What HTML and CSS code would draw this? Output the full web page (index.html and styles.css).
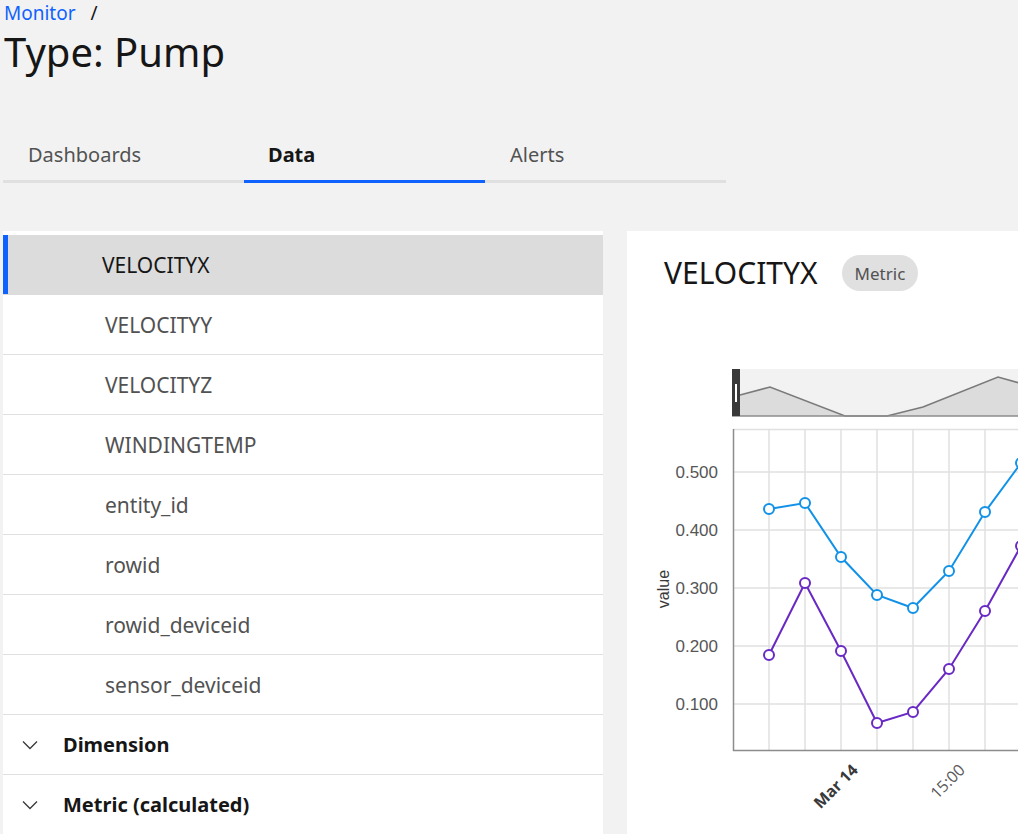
FILE: index.html
```html
<!DOCTYPE html>
<html lang="en">
<head>
<meta charset="utf-8">
<title>Type: Pump</title>
<link rel="stylesheet" href="styles.css">
</head>
<body>
<header class="page-header">
  <nav class="breadcrumb">
    <a class="crumb-link">Monitor</a>
    <span class="crumb-sep">/</span>
  </nav>
  <h1 class="page-title">Type: Pump</h1>
</header>

<div class="tabs">
  <div class="tab">Dashboards</div>
  <div class="tab tab-active">Data</div>
  <div class="tab">Alerts</div>
</div>

<main class="content">
  <section class="list-panel">
    <div class="row row-selected">VELOCITYX</div>
    <div class="row">VELOCITYY</div>
    <div class="row">VELOCITYZ</div>
    <div class="row">WINDINGTEMP</div>
    <div class="row">entity_id</div>
    <div class="row">rowid</div>
    <div class="row">rowid_deviceid</div>
    <div class="row">sensor_deviceid</div>
    <div class="row row-group">
      <svg class="chevron" viewBox="0 0 16 10" width="16" height="10"><path d="M1 1.5 L8 8.5 L15 1.5" fill="none" stroke="#393939" stroke-width="1.3"/></svg>
      <span>Dimension</span>
    </div>
    <div class="row row-group">
      <svg class="chevron" viewBox="0 0 16 10" width="16" height="10"><path d="M1 1.5 L8 8.5 L15 1.5" fill="none" stroke="#393939" stroke-width="1.3"/></svg>
      <span>Metric (calculated)</span>
    </div>
  </section>

  <section class="detail-card">
    <div class="detail-header">
      <h2 class="detail-title">VELOCITYX</h2>
      <span class="tag">Metric</span>
    </div>
    <svg class="chart" width="391" height="543" viewBox="627 291 391 543">
      <!-- brush / minimap -->
      <rect x="732" y="369" width="300" height="47" fill="#f2f2f2"/>
      <path d="M740 395 L770 387 L845 416 L887 416 L923 407 L998 377 L1030 386 L1030 416 L740 416 Z" fill="#dcdcdc"/>
      <path d="M740 395 L770 387 L845 416 L887 416 L923 407 L998 377 L1030 386" fill="none" stroke="#7a7a7a" stroke-width="1.5"/>
      <line x1="732" y1="416" x2="1030" y2="416" stroke="#8d8d8d" stroke-width="1.5"/>
      <rect x="732" y="369" width="8" height="47" fill="#393939"/>
      <rect x="735" y="384" width="2" height="18" fill="#ffffff"/>

      <!-- grid -->
      <g stroke="#e0e0e0" stroke-width="1.5">
        <line x1="733" y1="429.5" x2="1030" y2="429.5"/>
        <line x1="733" y1="472" x2="1030" y2="472"/>
        <line x1="733" y1="530" x2="1030" y2="530"/>
        <line x1="733" y1="588" x2="1030" y2="588"/>
        <line x1="733" y1="646" x2="1030" y2="646"/>
        <line x1="733" y1="704" x2="1030" y2="704"/>
        <line x1="769" y1="429" x2="769" y2="750"/>
        <line x1="805" y1="429" x2="805" y2="750"/>
        <line x1="841" y1="429" x2="841" y2="750"/>
        <line x1="877" y1="429" x2="877" y2="750"/>
        <line x1="913" y1="429" x2="913" y2="750"/>
        <line x1="949" y1="429" x2="949" y2="750"/>
        <line x1="985" y1="429" x2="985" y2="750"/>
      </g>
      <!-- axes -->
      <line x1="733.5" y1="429" x2="733.5" y2="751" stroke="#8d8d8d" stroke-width="1.5"/>
      <line x1="733" y1="750.5" x2="1030" y2="750.5" stroke="#8d8d8d" stroke-width="1.5"/>

      <!-- y tick labels -->
      <g class="tick-y" text-anchor="end">
        <text x="718" y="478">0.500</text>
        <text x="718" y="536">0.400</text>
        <text x="718" y="594">0.300</text>
        <text x="718" y="652">0.200</text>
        <text x="718" y="710">0.100</text>
      </g>
      <text class="axis-title" transform="translate(669 589) rotate(-90)" text-anchor="middle">value</text>

      <!-- x tick labels -->
      <text class="tick-x tick-x-bold" transform="translate(859 771) rotate(-45)" text-anchor="end">Mar 14</text>
      <text class="tick-x" transform="translate(966 771) rotate(-45)" text-anchor="end">15:00</text>

      <!-- series -->
      <polyline points="769,509 805,503 841,557 877,595 913,608 949,571 985,512 1021,463" fill="none" stroke="#1192e8" stroke-width="2"/>
      <polyline points="769,655 805,583 841,651 877,723 913,712 949,669 985,611 1021,546" fill="none" stroke="#6929c4" stroke-width="2"/>
      <g fill="#ffffff" stroke="#1192e8" stroke-width="2">
        <circle cx="769" cy="509" r="5"/>
        <circle cx="805" cy="503" r="5"/>
        <circle cx="841" cy="557" r="5"/>
        <circle cx="877" cy="595" r="5"/>
        <circle cx="913" cy="608" r="5"/>
        <circle cx="949" cy="571" r="5"/>
        <circle cx="985" cy="512" r="5"/>
        <circle cx="1021" cy="463" r="5"/>
      </g>
      <g fill="#ffffff" stroke="#6929c4" stroke-width="2">
        <circle cx="769" cy="655" r="5"/>
        <circle cx="805" cy="583" r="5"/>
        <circle cx="841" cy="651" r="5"/>
        <circle cx="877" cy="723" r="5"/>
        <circle cx="913" cy="712" r="5"/>
        <circle cx="949" cy="669" r="5"/>
        <circle cx="985" cy="611" r="5"/>
        <circle cx="1021" cy="546" r="5"/>
      </g>
    </svg>
  </section>
</main>
</body>
</html>
```

FILE: styles.css
```css
* { box-sizing: border-box; }

html, body {
  margin: 0;
  padding: 0;
}

body {
  width: 1018px;
  height: 834px;
  overflow: hidden;
  background: #f2f2f2;
  font-family: "Noto Sans", "Liberation Sans", sans-serif;
  color: #161616;
}

.page-header {
  padding-left: 4px;
}

.breadcrumb {
  display: flex;
  align-items: center;
  height: 26px;
  font-size: 19px;
  line-height: 26px;
}

.crumb-link {
  color: #0f62fe;
  text-decoration: none;
}

.crumb-sep {
  margin-left: 15px;
  color: #161616;
}

.page-title {
  margin: 2px 0 0 0;
  font-size: 40px;
  font-weight: 400;
  line-height: 48px;
  color: #161616;
}

.tabs {
  display: flex;
  margin-top: 52px;
  margin-left: 3px;
  width: 723px;
}

.tab {
  width: 241px;
  height: 55px;
  padding-left: 25px;
  padding-top: 1px;
  display: flex;
  align-items: center;
  border-bottom: 3px solid #e0e0e0;
  font-size: 20px;
  color: #525252;
}

.tab-active {
  border-bottom-color: #0f62fe;
  color: #161616;
  font-weight: 700;
  padding-left: 24px;
}

.content {
  display: flex;
  margin-top: 48px;
  padding-left: 3px;
  gap: 24px;
  height: 603px;
}

.list-panel {
  width: 600px;
  flex-shrink: 0;
  background: #ffffff;
  padding-top: 4px;
}

.row {
  height: 60px;
  display: flex;
  align-items: center;
  padding-left: 102px;
  border-bottom: 1px solid #e0e0e0;
  font-size: 21px;
  color: #525252;
}

.row-selected {
  background: #dcdcdc;
  color: #161616;
  padding-left: 99px;
  box-shadow: inset 5px 0 0 #0f62fe;
  border-bottom-color: #dcdcdc;
}

.row-group {
  padding-left: 19px;
  font-size: 20px;
  font-weight: 700;
  color: #161616;
}

.chevron {
  display: block;
  width: 16px;
  height: 10px;
  margin-right: 25px;
}

.detail-card {
  flex: 1;
  background: #ffffff;
  padding-top: 24px;
  overflow: hidden;
}

.detail-header {
  display: flex;
  align-items: center;
  gap: 24px;
  height: 36px;
  padding-left: 37px;
}

.detail-title {
  margin: 0;
  font-size: 30px;
  font-weight: 400;
  line-height: 36px;
  color: #161616;
}

.tag {
  display: inline-flex;
  align-items: center;
  height: 36px;
  padding: 0 13px;
  border-radius: 18px;
  background: #e0e0e0;
  color: #525252;
  font-size: 17px;
}

.chart {
  display: block;
  overflow: visible;
}

.tick-y {
  font-family: "Liberation Sans", Arial, sans-serif;
  font-size: 17px;
  fill: #565656;
}

.axis-title {
  font-family: "Liberation Sans", Arial, sans-serif;
  font-size: 16px;
  fill: #393939;
}

.tick-x {
  font-family: "Open Sans", "Liberation Sans", sans-serif;
  font-size: 16px;
  fill: #5a5a5a;
}

.tick-x-bold {
  font-weight: 700;
  fill: #393939;
}
```
